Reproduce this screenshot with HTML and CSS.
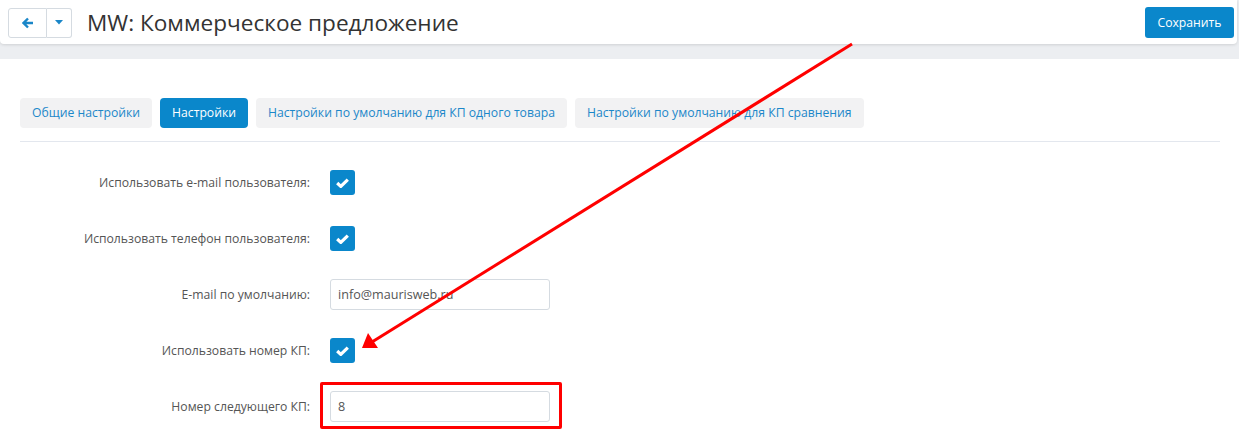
FILE: index.html
```html
<!DOCTYPE html>
<html lang="ru">
<head>
    <meta charset="UTF-8">
    <title>MW: Коммерческое предложение</title>
    <link rel="stylesheet" href="styles.css">
</head>
<body>
    <div class="topbar">
        <div class="btn-group">
            <button class="btn-back">
                <svg width="12" height="12" viewBox="0 0 12 12"><path d="M6 1.5 L1.5 6 L6 10.5 M1.8 6 H11" fill="none" stroke="#1a86c8" stroke-width="2.4" stroke-linejoin="miter"/></svg>
            </button>
            <button class="btn-caret">
                <svg width="8" height="5" viewBox="0 0 8 5"><path d="M0 0 H8 L4 4.5 Z" fill="#1a86c8"/></svg>
            </button>
        </div>
        <h1>MW: Коммерческое предложение</h1>
        <button class="btn-save">Сохранить</button>
    </div>

    <div class="panel">
        <div class="tabs">
            <a class="tab">Общие настройки</a>
            <a class="tab active">Настройки</a>
            <a class="tab">Настройки по умолчанию для КП одного товара</a>
            <a class="tab">Настройки по умолчанию для КП сравнения</a>
        </div>

        <div class="form">
            <div class="form-row">
                <label>Использовать e-mail пользователя:</label>
                <span class="check"><svg width="13" height="10" viewBox="0 0 13 10"><path d="M1.2 5 L4.8 8.4 L11.8 1.6" fill="none" stroke="#fff" stroke-width="3.2"/></svg></span>
            </div>
            <div class="form-row">
                <label>Использовать телефон пользователя:</label>
                <span class="check"><svg width="13" height="10" viewBox="0 0 13 10"><path d="M1.2 5 L4.8 8.4 L11.8 1.6" fill="none" stroke="#fff" stroke-width="3.2"/></svg></span>
            </div>
            <div class="form-row">
                <label>E-mail по умолчанию:</label>
                <input type="text" value="info@maurisweb.ru">
            </div>
            <div class="form-row">
                <label>Использовать номер КП:</label>
                <span class="check"><svg width="13" height="10" viewBox="0 0 13 10"><path d="M1.2 5 L4.8 8.4 L11.8 1.6" fill="none" stroke="#fff" stroke-width="3.2"/></svg></span>
            </div>
            <div class="form-row">
                <label>Номер следующего КП:</label>
                <input type="text" value="8">
            </div>
        </div>
    </div>

    <!-- annotation -->
    <div class="mark-box"></div>
    <svg class="mark-arrow" width="1239" height="448" viewBox="0 0 1239 448">
        <line x1="852" y1="44" x2="372" y2="342" stroke="#f00" stroke-width="3"/>
        <path d="M362 348 L368 333 L378 348 Z" fill="#f00"/>
    </svg>
</body>
</html>
```

FILE: styles.css
```css
body {
    margin: 0;
    background: #eceef1;
    font-family: "Open Sans", Arial, sans-serif;
    color: #555;
    width: 1239px;
    height: 448px;
    overflow: hidden;
    position: relative;
}

.topbar {
    background: #fff;
    height: 44px;
    margin: 0 2px 15px 0;
    border-radius: 0 0 4px 4px;
    box-shadow: 0 1px 3px rgba(0, 0, 0, 0.12);
    display: flex;
    align-items: center;
    padding: 0 3px 0 8px;
}

.btn-group {
    display: flex;
    height: 30px;
    margin-top: 1px;
}

.btn-group button {
    background: #fff;
    border: 1px solid #d5dbe1;
    height: 30px;
    padding: 0;
    display: flex;
    align-items: center;
    justify-content: center;
}

.btn-back {
    width: 39px;
    border-radius: 3px 0 0 3px;
}

.btn-caret {
    width: 25px;
    border-left: none !important;
    border-radius: 0 3px 3px 0;
}

.topbar h1 {
    font-size: 22.6px;
    font-weight: normal;
    color: #333;
    margin: 0 0 0 15px;
    flex: 1;
}

.btn-save {
    background: #0a87cb;
    color: #fff;
    border: none;
    border-radius: 3px;
    font-family: "Open Sans", Arial, sans-serif;
    font-size: 12.2px;
    width: 89px;
    height: 31px;
    margin-top: 1px;
}

.panel {
    background: #fff;
    padding: 39px 19px 0 20px;
    height: 350px;
}

.tabs {
    display: flex;
    gap: 8px;
    padding-bottom: 13px;
    border-bottom: 1px solid #e3e7ee;
}

.tab {
    background: #f2f2f3;
    color: #1c87c9;
    font-size: 12.2px;
    height: 30px;
    line-height: 30px;
    padding: 0 12px;
    border-radius: 4px;
}

.tab.active {
    background: #0a87cb;
    color: #fff;
}

.form {
    padding-top: 28px;
}

.form-row {
    display: flex;
    align-items: center;
    height: 25px;
    margin-bottom: 31px;
}

.form-row label {
    width: 290px;
    text-align: right;
    font-size: 12.2px;
    color: #555;
    margin-right: 20px;
}

.check {
    width: 25px;
    height: 25px;
    background: #0a87cb;
    border-radius: 3px;
    display: flex;
    align-items: center;
    justify-content: center;
}

.form-row input {
    width: 220px;
    height: 31px;
    box-sizing: border-box;
    border: 1px solid #d5dbe1;
    border-radius: 3px;
    padding: 0 7px;
    font-family: "Open Sans", Arial, sans-serif;
    font-size: 12.6px;
    color: #555;
}

.mark-box {
    position: absolute;
    left: 320px;
    top: 382px;
    width: 236px;
    height: 41px;
    border: 3px solid #f00;
    border-radius: 2px;
}

.mark-arrow {
    position: absolute;
    left: 0;
    top: 0;
    pointer-events: none;
}
```
